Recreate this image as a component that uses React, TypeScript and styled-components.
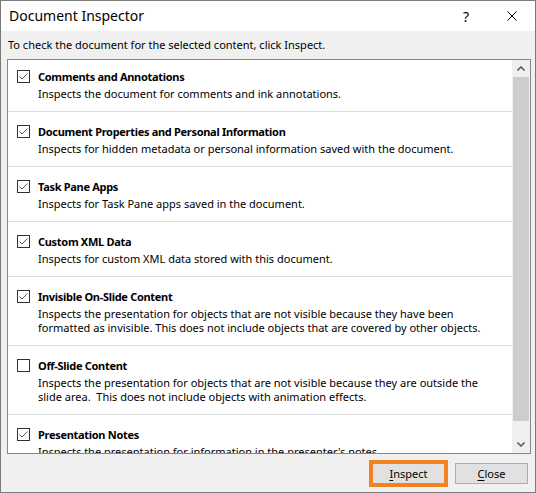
import { createGlobalStyle, styled } from 'styled-components';

const GlobalStyle = createGlobalStyle`
  * { box-sizing: border-box; }
  body {
    margin: 0;
    font-family: 'Segoe UI', 'Noto Sans', sans-serif;
    color: #000;
  }
`;

const items = [
  {
    title: 'Comments and Annotations',
    lines: ['Inspects the document for comments and ink annotations.'],
    checked: true,
  },
  {
    title: 'Document Properties and Personal Information',
    lines: ['Inspects for hidden metadata or personal information saved with the document.'],
    checked: true,
  },
  {
    title: 'Task Pane Apps',
    lines: ['Inspects for Task Pane apps saved in the document.'],
    checked: true,
  },
  {
    title: 'Custom XML Data',
    lines: ['Inspects for custom XML data stored with this document.'],
    checked: true,
  },
  {
    title: 'Invisible On-Slide Content',
    lines: [
      'Inspects the presentation for objects that are not visible because they have been',
      'formatted as invisible. This does not include objects that are covered by other objects.',
    ],
    checked: true,
  },
  {
    title: 'Off-Slide Content',
    lines: [
      'Inspects the presentation for objects that are not visible because they are outside the',
      'slide area.  This does not include objects with animation effects.',
    ],
    checked: false,
  },
  {
    title: 'Presentation Notes',
    lines: ["Inspects the presentation for information in the presenter's notes."],
    checked: true,
  },
];

const Window = styled.div`
  width: 536px;
  height: 493px;
  border: 1px solid #7a7a7a;
  background: #f0f0f0;
  display: flex;
  flex-direction: column;
  overflow: hidden;
`;

const TitleBar = styled.div`
  height: 30px;
  background: #fff;
  display: flex;
  align-items: center;
  flex-shrink: 0;
`;

const Title = styled.div`
  flex: 1;
  padding-left: 8px;
  font-size: 14px;
  line-height: 20px;
`;

const TitleButton = styled.div`
  width: 46px;
  height: 30px;
  display: flex;
  align-items: center;
  justify-content: center;
  font-size: 14px;
`;

const Body = styled.div`
  flex: 1;
  display: flex;
  flex-direction: column;
  padding: 6px 4px 0 6px;
`;

const Instruction = styled.div`
  font-size: 11px;
  line-height: 16px;
  padding-left: 1px;
  margin-bottom: 6px;
`;

const ListBox = styled.div`
  height: 395px;
  border: 1px solid #828790;
  background: #fff;
  display: flex;
`;

const ListContent = styled.div`
  flex: 1;
  overflow: hidden;
`;

const Item = styled.div`
  padding: 12px 0 10px 9px;
  border-bottom: 1px solid #dcdcdc;
  &:first-child {
    padding-top: 9px;
  }
`;

const ItemHead = styled.div`
  display: flex;
  align-items: center;
  gap: 8px;
  height: 15px;
`;

const CheckBox = styled.div`
  width: 13px;
  height: 13px;
  border: 1px solid #333;
  background: #fff;
  flex-shrink: 0;
  display: flex;
`;

const ItemTitle = styled.div`
  font-size: 11px;
  font-weight: 700;
  letter-spacing: -0.3px;
  line-height: 15px;
  white-space: nowrap;
`;

const ItemDesc = styled.div`
  margin: 3px 0 0 21px;
  font-size: 11px;
  line-height: 14px;
  white-space: pre;
`;

const ScrollBar = styled.div`
  width: 18px;
  background: #f0f0f0;
  display: flex;
  flex-direction: column;
  flex-shrink: 0;
`;

const ScrollArrow = styled.div`
  height: 17px;
  display: flex;
  align-items: center;
  justify-content: center;
  flex-shrink: 0;
`;

const Track = styled.div`
  flex: 1;
  padding: 0 1px;
`;

const Thumb = styled.div`
  height: 344px;
  background: #cdcdcd;
`;

const ButtonRow = styled.div`
  display: flex;
  justify-content: flex-end;
  gap: 10px;
  margin-top: 9px;
  padding-right: 3px;
`;

const Button = styled.button<{ $highlight?: boolean }>`
  width: 73px;
  height: 21px;
  border: 1px solid #adadad;
  background: #e1e1e1;
  font-family: inherit;
  font-size: 11px;
  color: #000;
  padding: 0;
  outline: ${(p) => (p.$highlight ? '4px solid #f58220' : 'none')};
  outline-offset: -1px;

  u {
    text-decoration-thickness: 1px;
    text-underline-offset: 2px;
  }
`;

const Check = () => (
  <svg width="11" height="11" viewBox="0 0 11 11">
    <path d="M1.5 5.5 L4 8 L9.5 2.5" fill="none" stroke="#555" strokeWidth="1" />
  </svg>
);

const App = () => {
  return (
    <>
      <GlobalStyle />
      <Window>
        <TitleBar>
          <Title>Document Inspector</Title>
          <TitleButton>?</TitleButton>
          <TitleButton>
            <svg width="10" height="10" viewBox="0 0 10 10">
              <path d="M0.5 0.5 L9.5 9.5 M9.5 0.5 L0.5 9.5" stroke="#000" strokeWidth="1" />
            </svg>
          </TitleButton>
        </TitleBar>
        <Body>
          <Instruction>To check the document for the selected content, click Inspect.</Instruction>
          <ListBox>
            <ListContent>
              {items.map((item) => (
                <Item key={item.title}>
                  <ItemHead>
                    <CheckBox>{item.checked && <Check />}</CheckBox>
                    <ItemTitle>{item.title}</ItemTitle>
                  </ItemHead>
                  <ItemDesc>{item.lines.join('\n')}</ItemDesc>
                </Item>
              ))}
            </ListContent>
            <ScrollBar>
              <ScrollArrow>
                <svg width="8" height="5" viewBox="0 0 8 5">
                  <path d="M0.5 4.5 L4 1 L7.5 4.5" fill="none" stroke="#606060" strokeWidth="1.6" />
                </svg>
              </ScrollArrow>
              <Track>
                <Thumb />
              </Track>
              <ScrollArrow>
                <svg width="8" height="5" viewBox="0 0 8 5">
                  <path d="M0.5 0.5 L4 4 L7.5 0.5" fill="none" stroke="#606060" strokeWidth="1.6" />
                </svg>
              </ScrollArrow>
            </ScrollBar>
          </ListBox>
          <ButtonRow>
            <Button $highlight>
              <u>I</u>nspect
            </Button>
            <Button>
              <u>C</u>lose
            </Button>
          </ButtonRow>
        </Body>
      </Window>
    </>
  );
};

export default App;
